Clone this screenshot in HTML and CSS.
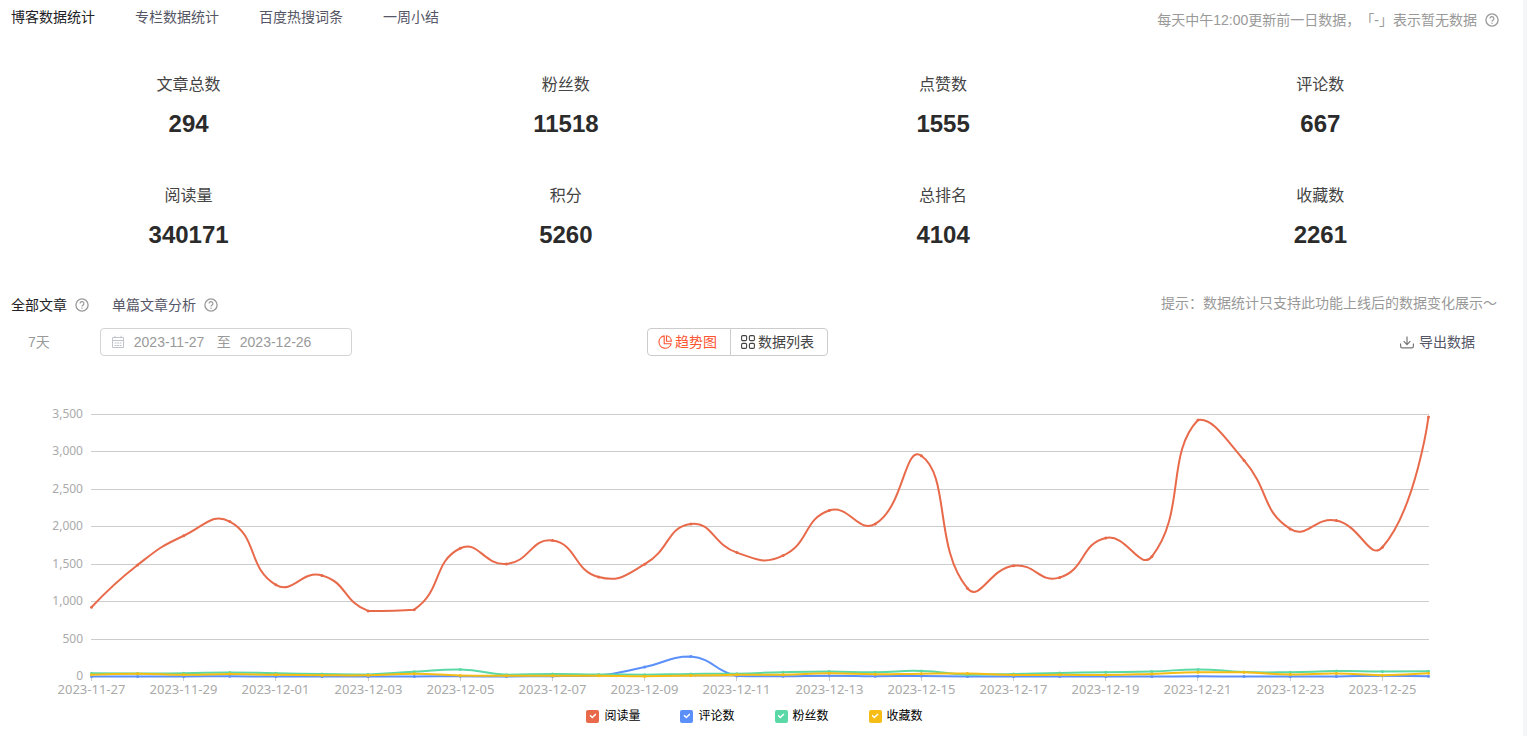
FILE: index.html
```html
<!DOCTYPE html>
<html lang="zh-CN">
<head>
<meta charset="utf-8">
<title>博客数据统计</title>
<link rel="stylesheet" href="styles.css">
</head>
<body>
<svg class="sprite" aria-hidden="true">
  <symbol id="help" viewBox="0 0 14 14">
    <circle cx="7" cy="7" r="6.1" fill="none" stroke="currentColor" stroke-width="1.3"/>
    <path d="M5.1 5.6a1.9 1.9 0 1 1 2.8 1.6C7.2 7.6 7 7.9 7 8.6" fill="none" stroke="currentColor" stroke-width="1.2"/>
    <rect x="6.4" y="9.6" width="1.2" height="1.2" fill="currentColor"/>
  </symbol>
</svg>
<main class="page">
  <header class="top">
    <nav class="tabs">
      <a class="tab active" href="#blog">博客数据统计</a>
      <a class="tab" href="#column">专栏数据统计</a>
      <a class="tab" href="#hot">百度热搜词条</a>
      <a class="tab" href="#week">一周小结</a>
    </nav>
    <p class="note">每天中午12:00更新前一日数据，「-」表示暂无数据 <svg class="help"><use href="#help"/></svg></p>
  </header>

  <dl class="stats">
    <div class="stat"><dt>文章总数</dt><dd>294</dd></div>
    <div class="stat"><dt>粉丝数</dt><dd>11518</dd></div>
    <div class="stat"><dt>点赞数</dt><dd>1555</dd></div>
    <div class="stat"><dt>评论数</dt><dd>667</dd></div>
    <div class="stat"><dt>阅读量</dt><dd>340171</dd></div>
    <div class="stat"><dt>积分</dt><dd>5260</dd></div>
    <div class="stat"><dt>总排名</dt><dd>4104</dd></div>
    <div class="stat"><dt>收藏数</dt><dd>2261</dd></div>
  </dl>

  <section>
    <div class="scope">
      <nav class="scope-tabs">
        <a class="tab active" href="#all">全部文章</a><svg class="help"><use href="#help"/></svg>
        <a class="tab second" href="#single">单篇文章分析</a><svg class="help"><use href="#help"/></svg>
      </nav>
      <p class="tip">提示：数据统计只支持此功能上线后的数据变化展示～</p>
    </div>

    <div class="toolbar">
      <div class="range">
        <button class="days" type="button">7天</button>
        <div class="dates">
          <svg class="cal" viewBox="0 0 14 14" fill="none" stroke="currentColor">
            <path d="M1.5 2.5h11v10h-11zM1.5 5.5h11M4 .8v2.4M10 .8v2.4"/>
            <path d="M3.5 8h7M3.5 10.5h7" stroke-dasharray="2 .6"/>
          </svg>
          <input class="date" type="text" value="2023-11-27" aria-label="开始日期">
          <span>至</span>
          <input class="date" type="text" value="2023-12-26" aria-label="结束日期">
        </div>
      </div>
      <div class="views">
        <button class="view on" type="button">
          <svg class="icon" viewBox="0 0 14 14" fill="none" stroke="currentColor" stroke-width="1.1">
            <path d="M6.2.9A6.2 6.2 0 1 0 13.1 8.8H6.2zM8.5.7v5.6h4.9A5.6 5.6 0 0 0 8.5.7z" stroke-linejoin="round"/>
          </svg>趋势图</button>
        <button class="view" type="button">
          <svg class="icon" viewBox="0 0 14 14" fill="none" stroke="currentColor" stroke-width="1.1">
            <rect x=".6" y=".6" width="5" height="5" rx="1.2"/><rect x="8.4" y=".6" width="5" height="5" rx="1.2"/>
            <rect x=".6" y="8.4" width="5" height="5" rx="1.2"/><rect x="8.4" y="8.4" width="5" height="5" rx="1.2"/>
          </svg>数据列表</button>
      </div>
      <button class="export" type="button">
        <svg class="icon" viewBox="0 0 14 14" fill="none" stroke="currentColor" stroke-width="1.2">
          <path d="M7 1.5v8M3.6 6.2 7 9.6l3.4-3.4M.6 8.5v2.8q0 1.6 1.6 1.6h9.6q1.6 0 1.6-1.6V8.5"/>
        </svg>导出数据</button>
    </div>

    <svg class="chart" id="chart" role="img" aria-label="数据趋势图"></svg>
    <div class="legend">
      <label class="key"><input class="box reads" type="checkbox" checked>阅读量</label>
      <label class="key"><input class="box comments" type="checkbox" checked>评论数</label>
      <label class="key"><input class="box fans" type="checkbox" checked>粉丝数</label>
      <label class="key"><input class="box saves" type="checkbox" checked>收藏数</label>
    </div>
  </section>
</main>
<script src="chart.js"></script>
</body>
</html>
```
FILE: styles.css
```css
* { box-sizing: border-box; }
body {
  margin: 0;
  background: #f5f6f7;
  color: #222226;
  font: 14px/20px "Liberation Sans", "Noto Sans CJK SC", sans-serif;
}
p, dl, dd { margin: 0; }
button, input { font: inherit; color: inherit; margin: 0; padding: 0; border: 0; background: none; }
button { cursor: pointer; }
.sprite { display: none; }
.page { min-height: 100vh; margin-right: 4px; padding-right: 14px; background: #fff; }

.top { display: flex; justify-content: space-between; padding: 7px 10px 0 11px; }
.tabs { display: flex; gap: 40px; }
.tab { color: #555666; text-decoration: none; }
.tab.active { color: #222226; }
.note { display: flex; align-items: center; padding-top: 3px; color: #999; text-spacing-trim: space-all; }
.help { width: 14px; height: 14px; margin-left: 8px; color: #999; }

.stats { display: grid; grid-template-columns: repeat(4, 1fr); row-gap: 42px; padding-top: 41px; text-align: center; }
.stat dt { font-size: 16px; line-height: 28px; color: #444; }
.stat dd { padding-top: 9px; font-size: 24px; line-height: 32px; font-weight: bold; color: #2b2b2b; }

.scope { display: flex; justify-content: space-between; padding: 42px 12px 0 11px; }
.scope-tabs { display: flex; align-items: center; padding-top: 2px; }
.second { margin-left: 23px; }
.tip { color: #999; }

.toolbar { display: grid; grid-template-columns: 1fr auto 1fr; align-items: center; padding: 13px 34px 0 0; }
.range { display: flex; align-items: center; gap: 50px; margin-left: 28px; color: #999; }
.dates { display: flex; align-items: center; gap: 9px; width: 252px; height: 28px; padding-left: 10px; border: 1px solid #d4d4d4; border-radius: 4px; }
.cal { width: 14px; height: 14px; color: #c0c4cc; }
.date { width: 74px; }
.views { display: flex; height: 28px; border: 1px solid #ccc; border-radius: 4px; }
.view { display: flex; align-items: center; gap: 3px; padding: 0 13px 0 10px; color: #444; }
.view.on { color: #fc5531; border-right: 1px solid #ccc; }
.icon { width: 14px; height: 14px; }
.export { display: flex; align-items: center; gap: 5px; justify-self: end; color: #555666; }
.export .icon { color: #777; }

.chart { display: block; width: 100%; height: 344px; }
.value-text { font: 12px "Noto Sans", sans-serif; fill: #aaa; }
.date-text { font: 13px "Noto Sans", sans-serif; fill: #aaa; }
.grid-line { stroke: #ccc; stroke-width: 1; }
.line { fill: none; stroke-width: 2; }

.legend { display: flex; justify-content: center; gap: 40px; padding-top: 6px; }
.key { display: flex; align-items: center; gap: 5px; font-size: 12px; color: #000; }
.box { appearance: none; display: grid; place-items: center; width: 13px; height: 13px; border-radius: 2px; }
.box:checked::after {
  content: "";
  width: 7px;
  height: 6px;
  background: #fff;
  clip-path: polygon(0 45%, 16% 28%, 40% 58%, 84% 8%, 100% 25%, 40% 92%);
}
.reads { background: #e86a4a; }
.comments { background: #5b8ff9; }
.fans { background: #5ad8a6; }
.saves { background: #f6bd16; }
```
FILE: chart.js
```js
const svg = document.getElementById("chart");
const series = [
  { color: "#e86a4a", data: [925,1490,1880,2070,1225,1350,876,893,1713,1503,1816,1329,1500,2038,1655,1615,2217,2038,2949,1178,1481,1321,1851,1602,3426,2886,1971,2084,1727,3467] },
  { color: "#5b8ff9", data: [1,0,1,2,0,0,0,1,2,1,5,12,127,266,8,2,10,5,6,1,0,0,0,0,2,0,0,0,10,3] },
  { color: "#5ad8a6", data: [45,40,42,55,43,32,28,65,93,25,32,27,25,35,38,58,66,58,74,25,33,47,58,66,95,60,58,72,68,70] },
  { color: "#f6bd16", data: [22,38,22,32,22,17,17,36,15,10,10,10,5,12,22,25,43,30,38,40,20,22,20,35,56,56,28,40,18,42] }
];
const count = 30;
const left = 91, rightGap = 81, top0 = 58, bottom = 320;
const max = 3500;

function add(tag, attrs, text) {
  const el = document.createElementNS("http://www.w3.org/2000/svg", tag);
  for (const k in attrs) el.setAttribute(k, attrs[k]);
  if (text !== undefined) el.textContent = text;
  svg.appendChild(el);
}

// Smoothed cubic path; control points stay inside the bounds of the series.
function smoothPath(pts) {
  const ys = pts.map(p => p[1]);
  const lo = Math.min(...ys), hi = Math.max(...ys);
  const clamp = y => Math.max(lo, Math.min(hi, y));
  let d = "M" + pts[0];
  let out = pts[0];
  for (let i = 1; i < pts.length; i++) {
    const p = pts[i], a = pts[i - 1], b = pts[i + 1];
    let inn = p, next = p;
    if (b) {
      const la = Math.hypot(p[0] - a[0], p[1] - a[1]);
      const lb = Math.hypot(p[0] - b[0], p[1] - b[1]);
      const r = lb / (la + lb);
      const v = [b[0] - a[0], b[1] - a[1]];
      inn = [p[0] - v[0] * 0.5 * (1 - r), clamp(p[1] - v[1] * 0.5 * (1 - r))];
      next = [p[0] + v[0] * 0.5 * r, clamp(p[1] + v[1] * 0.5 * r)];
    }
    d += "C" + out + " " + inn + " " + p;
    out = next;
  }
  return d;
}

function draw() {
  svg.replaceChildren();
  const right = svg.clientWidth - rightGap;
  const x = i => left + 0.5 + (right - left) * i / (count - 1);
  const y = v => bottom + 0.5 - (bottom - top0) * v / max;
  for (let v = 0; v <= max; v += 500) {
    const gy = Math.floor(y(v)) + 0.5;
    add("line", { class: "grid-line", x1: left, x2: right + 1, y1: gy, y2: gy });
    add("text", { class: "value-text", x: left - 8, y: gy + 3, "text-anchor": "end" }, v.toLocaleString("en-US"));
  }
  const start = Date.UTC(2023, 10, 27);
  for (let i = 0; i < count; i += 2) {
    const tx = Math.floor(x(i)) + 0.5;
    add("line", { class: "grid-line", x1: tx, x2: tx, y1: bottom, y2: bottom + 5 });
    add("text", { class: "date-text", x: tx, y: bottom + 18, "text-anchor": "middle" },
      new Date(start + i * 86400000).toISOString().slice(0, 10));
  }
  for (const s of series) {
    const pts = s.data.map((v, i) => [x(i), y(v)]);
    add("path", { class: "line", stroke: s.color, d: smoothPath(pts) });
    for (const p of pts) add("circle", { cx: p[0], cy: p[1], r: 1.5, fill: s.color });
  }
}
draw();
window.addEventListener("resize", draw);
```
